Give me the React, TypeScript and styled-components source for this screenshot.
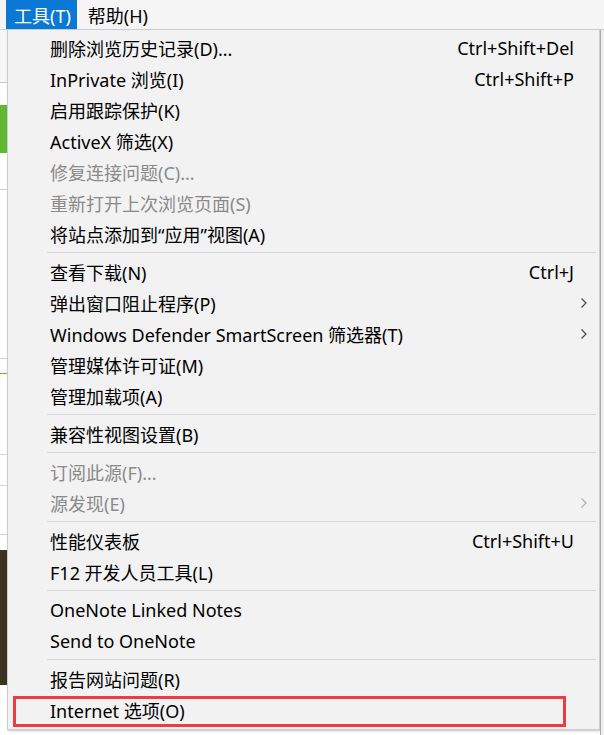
import React from 'react';
import styled, { createGlobalStyle } from 'styled-components';

const GlobalStyle = createGlobalStyle`
  html, body {
    margin: 0;
    padding: 0;
    background: #ffffff;
  }
  body {
    font-family: "Noto Sans", "Noto Sans CJK SC", sans-serif;
  }
`;

const Screen = styled.div`
  width: 604px;
  height: 735px;
  overflow: hidden;
  display: flex;
  flex-direction: column;
  background: #ffffff;
  font-family: "Noto Sans", "Noto Sans CJK SC", sans-serif;
`;

const MenuBar = styled.div`
  height: 30px;
  flex-shrink: 0;
  display: flex;
  align-items: stretch;
  padding-left: 6px;
  background: #f5f5f5;
  border-bottom: 1px solid #cfcfcf;
  box-sizing: border-box;
`;

const BarItem = styled.div<{ $active?: boolean }>`
  display: flex;
  align-items: center;
  padding: 0 6px 0 8px;
  margin-right: 3px;
  font-size: 18px;
  color: ${p => (p.$active ? '#ffffff' : '#000000')};
  background: ${p => (p.$active ? '#0a78d4' : 'transparent')};
`;

const Body = styled.div`
  flex: 1;
  display: flex;
  min-height: 0;
`;

const PageStrip = styled.div`
  width: 7px;
  flex-shrink: 0;
  display: flex;
  flex-direction: column;
  background: #ffffff;
`;

const Piece = styled.div<{ $h: number; $bg?: string; $line?: string }>`
  height: ${p => p.$h}px;
  flex-shrink: 0;
  background: ${p => p.$bg || 'transparent'};
  border-bottom: ${p => (p.$line ? `1px solid ${p.$line}` : 'none')};
`;

const RightStrip = styled.div`
  width: 3px;
  flex-shrink: 0;
  background: #efefef;
  border-left: 1px solid #a9a9a9;
`;

const Menu = styled.div`
  flex: 1;
  align-self: flex-start;
  background: #f2f2f2;
  border: 1px solid #cccccc;
  border-top: none;
  padding: 2px 0 4px;
  box-shadow: 1px 1px 2px rgba(0, 0, 0, 0.25);
  font-size: 18px;
`;

const Row = styled.div<{ $disabled?: boolean }>`
  position: relative;
  height: 31px;
  display: flex;
  align-items: center;
  padding-left: 42px;
  color: ${p => (p.$disabled ? '#8a8a8a' : '#000000')};
  white-space: nowrap;
`;

const Label = styled.span`
  flex: 1;
`;

const Shortcut = styled.span`
  text-align: right;
`;

const ArrowSlot = styled.span`
  width: 25px;
  flex-shrink: 0;
  display: flex;
  align-items: center;
  padding-left: 6px;
  box-sizing: border-box;
`;

const Separator = styled.div`
  height: 1px;
  margin: 3px 3px 3px 39px;
  background: #d7d7d7;
`;

const Highlight = styled.div`
  position: absolute;
  left: 5px;
  top: 2px;
  width: 553px;
  height: 31px;
  border: 3px solid #ef3a3f;
  box-sizing: border-box;
  pointer-events: none;
`;

type Item = {
  label: string;
  shortcut?: string;
  sub?: boolean;
  disabled?: boolean;
  marked?: boolean;
};

const groups: Item[][] = [
  [
    { label: '删除浏览历史记录(D)...', shortcut: 'Ctrl+Shift+Del' },
    { label: 'InPrivate 浏览(I)', shortcut: 'Ctrl+Shift+P' },
    { label: '启用跟踪保护(K)' },
    { label: 'ActiveX 筛选(X)' },
    { label: '修复连接问题(C)...', disabled: true },
    { label: '重新打开上次浏览页面(S)', disabled: true },
    { label: '将站点添加到“应用”视图(A)' },
  ],
  [
    { label: '查看下载(N)', shortcut: 'Ctrl+J' },
    { label: '弹出窗口阻止程序(P)', sub: true },
    { label: 'Windows Defender SmartScreen 筛选器(T)', sub: true },
    { label: '管理媒体许可证(M)' },
    { label: '管理加载项(A)' },
  ],
  [{ label: '兼容性视图设置(B)' }],
  [
    { label: '订阅此源(F)...', disabled: true },
    { label: '源发现(E)', sub: true, disabled: true },
  ],
  [
    { label: '性能仪表板', shortcut: 'Ctrl+Shift+U' },
    { label: 'F12 开发人员工具(L)' },
  ],
  [{ label: 'OneNote Linked Notes' }, { label: 'Send to OneNote' }],
  [{ label: '报告网站问题(R)' }, { label: 'Internet 选项(O)', marked: true }],
];

const Chevron = ({ disabled }: { disabled?: boolean }) => (
  <svg width="8" height="12" viewBox="0 0 8 12">
    <path
      d="M1.5 1.5 L6 6 L1.5 10.5"
      fill="none"
      stroke={disabled ? '#b0b0b0' : '#4a4a4a'}
      strokeWidth="1.2"
    />
  </svg>
);

const MenuRow = ({ item }: { item: Item }) => (
  <Row $disabled={item.disabled}>
    <Label>{item.label}</Label>
    {item.shortcut && <Shortcut>{item.shortcut}</Shortcut>}
    <ArrowSlot>{item.sub && <Chevron disabled={item.disabled} />}</ArrowSlot>
    {item.marked && <Highlight />}
  </Row>
);

export default function App() {
  return (
    <Screen>
      <GlobalStyle />
      <MenuBar>
        <BarItem $active>工具(T)</BarItem>
        <BarItem>帮助(H)</BarItem>
      </MenuBar>
      <Body>
        <PageStrip>
          <Piece $h={52} $bg="#f7f7f7" $line="#c8c8c8" />
          <Piece $h={22} />
          <Piece $h={48} $bg="#5fb832" />
          <Piece $h={36} $line="#cfcfcf" />
          <Piece $h={168} $line="#d0d0d0" />
          <Piece $h={14} $line="#5fb832" />
          <Piece $h={80} $line="#d6d6d6" />
          <Piece $h={30} $line="#d6d6d6" />
          <Piece $h={48} $line="#cfcfcf" />
          <Piece $h={15} />
          <Piece $h={135} $bg="#3b3320" />
          <Piece $h={60} />
        </PageStrip>
        <Menu>
          {groups.map((group, gi) => (
            <React.Fragment key={gi}>
              {gi > 0 && <Separator />}
              {group.map(item => (
                <MenuRow key={item.label} item={item} />
              ))}
            </React.Fragment>
          ))}
        </Menu>
        <RightStrip />
      </Body>
    </Screen>
  );
}
